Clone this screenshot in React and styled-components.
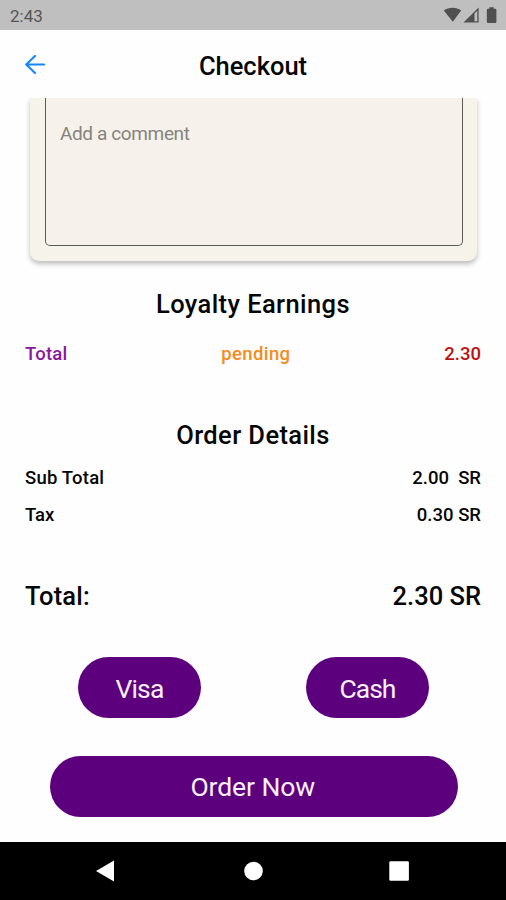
import React from 'react'
import styled, { createGlobalStyle } from 'styled-components'


function App() {
  return (
    <>
      <GlobalStyle />
      <Screen>
        <StatusBar>
          <Clock>2:43</Clock>
          <StatusIcons />
        </StatusBar>

        <Header>
          <BackButton aria-label='Back'>
            <BackArrow />
          </BackButton>
          <PageTitle>Checkout</PageTitle>
        </Header>

        <Content>
          <CommentCard>
            <CommentInput placeholder='Add a comment' />
          </CommentCard>

          <SectionTitle $spacing='0.4px'>Loyalty Earnings</SectionTitle>
          <LoyaltyRow>
            <Cell $color='#8a17a0' $spacing='0.2px'>Total</Cell>
            <Cell $color='#f58b1c' $spacing='0.4px'>pending</Cell>
            <Cell $color='#bd1111'>2.30</Cell>
          </LoyaltyRow>

          <SectionTitle $spacing='0.4px'>Order Details</SectionTitle>
          <OrderRows>
            <Row>
              <Cell $spacing='0.2px'>Sub Total</Cell>
              <Cell>2.00{'  '}SR</Cell>
            </Row>
            <Row>
              <Cell>Tax</Cell>
              <Cell>0.30 SR</Cell>
            </Row>
          </OrderRows>

          <TotalRow>
            <TotalText $spacing='0.2px'>Total:</TotalText>
            <TotalText>2.30 SR</TotalText>
          </TotalRow>

          <PaymentMethods>
            <PillButton $width='123px' $spacing='-0.8px'>Visa</PillButton>
            <PillButton $width='123px' $spacing='-1px'>Cash</PillButton>
          </PaymentMethods>
          <OrderButton $width='407.5px' $spacing='-0.1px'>Order Now</OrderButton>
        </Content>

        <NavBar>
          <NavIcon><path d='M3 14 21 3.500v21z' /></NavIcon>
          <NavIcon><circle cx='14.500' cy='14' r='9.300' /></NavIcon>
          <NavIcon><rect x='4.300' y='4.200' width='19.600' height='19.600' rx='1.300' /></NavIcon>
        </NavBar>
      </Screen>
    </>
  )
}

export default App


function StatusIcons() {
  return (
    <svg width='56' height='18' viewBox='0 0 56 18' fill='#505050'>
      <path d='M1.800 4.500C6.500 0.700 14.500 0.700 19.200 4.500L10.800 15.800z' />
      <path d='M36.600 1.500V16.500H21.500z' />
      <path d='M32.500 7.600l2.800-2.800v10.500h-2.800z' fill='#bfbfbf' />
      <path d='M47.400 1.200h4.400v1.500h1.400q1.200 0 1.200 1.200v11.800q0 1.200-1.200 1.200h-7.200q-1.200 0-1.200-1.200v-11.800q0-1.200 1.200-1.200h1.400z' />
    </svg>
  )
}

function BackArrow() {
  return (
    <svg width='20' height='20' viewBox='0 0 20 20' fill='none' stroke='#1686ff' strokeWidth='2.100' strokeLinecap='round' strokeLinejoin='round'>
      <path d='M19 9.500H1.200M10 0.900 1.200 9.500l8.800 8.600' />
    </svg>
  )
}


const GlobalStyle = createGlobalStyle`
    * {
        box-sizing: border-box;
    }

    body {
        margin: 0;
        background: #fefefe;
        font-family: Roboto, "Liberation Sans", sans-serif;
    }
`

const Screen = styled.div`
    width: 506px;
    height: 900px;
    display: flex;
    flex-direction: column;
    overflow: hidden;
    color: #060606;
`

const StatusBar = styled.div`
    flex: none;
    height: 30px;
    padding: 0 8px 0 10px;
    display: flex;
    align-items: center;
    justify-content: space-between;
    background: #bfbfbf;
`

const Clock = styled.span`
    padding-top: 1px;
    font-size: 17px;
    color: #555;
`

const Header = styled.header`
    flex: none;
    height: 68px;
    padding: 1px 25px 0;
    display: grid;
    grid-template-columns: 40px 1fr 40px;
    align-items: center;
`

const BackButton = styled.button`
    border: 0;
    padding: 0;
    background: none;
    display: flex;
`

const PageTitle = styled.h1`
    margin: 0;
    padding-top: 3px;
    font-size: 25.500px;
    line-height: 30px;
    font-weight: 500;
    text-align: center;
`

const Content = styled.main`
    flex: 1;
    min-height: 0;
    overflow: hidden;
    padding: 0 25px;
    display: flex;
    flex-direction: column;
`

const CommentCard = styled.div`
    flex: none;
    height: 163px;
    margin: 0 4px 0 5px;
    padding: 0 14px 15px 15px;
    background: #f6f4ea;
    border-radius: 0 0 9px 9px;
    box-shadow: 0 3px 5px rgba(0, 0, 0, 0.26);
`

const CommentInput = styled.textarea`
    display: block;
    width: 100%;
    height: 100%;
    padding: 24px 14px;
    border: 1.500px solid #5c5b54;
    border-top: 0;
    border-radius: 0 0 5px 5px;
    background: #f6f2eb;
    resize: none;
    outline: 0;
    font: 400 19px/24px Roboto, "Liberation Sans", sans-serif;
    letter-spacing: -0.380px;

    &::placeholder {
        color: #85837e;
        opacity: 1;
    }
`

const SectionTitle = styled.h2`
    margin: 27px 0 0;
    font-size: 25.500px;
    line-height: 32px;
    font-weight: 500;
    text-align: center;
    letter-spacing: ${props => props.$spacing};
`

const Row = styled.div`
    height: 37px;
    display: flex;
    align-items: center;
    justify-content: space-between;
`

const LoyaltyRow = styled(Row)`
    margin: 15px 0 20px;
`

const OrderRows = styled.div`
    margin-top: 8px;
`

const Cell = styled.span`
    font-size: 18.500px;
    font-weight: 500;
    white-space: pre;
    color: ${props => props.$color || 'inherit'};
    letter-spacing: ${props => props.$spacing || '0'};
`

const TotalRow = styled.div`
    height: 40px;
    margin-top: 43px;
    display: flex;
    align-items: center;
    justify-content: space-between;
`

const TotalText = styled.span`
    font-size: 25.500px;
    font-weight: 500;
    letter-spacing: ${props => props.$spacing || '0'};
`

const PaymentMethods = styled.div`
    margin-top: 41px;
    padding: 0 52px 0 53px;
    display: flex;
    justify-content: space-between;
`

const PillButton = styled.button`
    width: ${props => props.$width};
    height: 61px;
    padding: 2px 0 0;
    border: 0;
    border-radius: 31px;
    background: #5c007d;
    color: #f8f0fa;
    font: 400 26.500px Roboto, "Liberation Sans", sans-serif;
    letter-spacing: ${props => props.$spacing};
`

const OrderButton = styled(PillButton)`
    margin: 38px 0 0 25px;
    padding: 0 2px 0 0;
`

const NavBar = styled.nav`
    flex: none;
    height: 58px;
    padding: 0 93px;
    display: flex;
    align-items: center;
    justify-content: space-between;
    background: #000;
`

const NavIcon = styled.svg.attrs({ viewBox: '0 0 28 28' })`
    width: 28px;
    height: 28px;
    fill: #fff;
`
